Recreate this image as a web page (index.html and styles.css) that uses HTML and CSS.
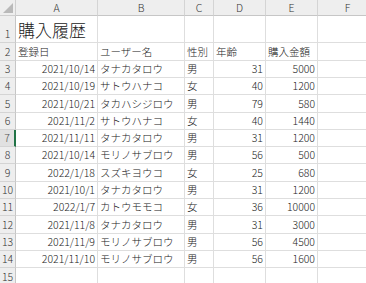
FILE: index.html
```html
<!DOCTYPE html>
<html lang="ja">
<head>
<meta charset="utf-8">
<title>購入履歴</title>
<link rel="stylesheet" href="styles.css">
</head>
<body>
<div class="sheet">
  <div class="corner"><span class="tri"></span></div>
  <div class="ch">A</div><div class="ch">B</div><div class="ch">C</div><div class="ch">D</div><div class="ch">E</div><div class="ch">F</div>

  <div class="rh">1</div><div class="c title">購入履歴</div><div class="c"></div><div class="c"></div><div class="c"></div><div class="c"></div><div class="c"></div>

  <div class="rh">2</div><div class="c">登録日</div><div class="c">ユーザー名</div><div class="c">性別</div><div class="c">年齢</div><div class="c">購入金額</div><div class="c"></div>

  <div class="rh">3</div><div class="c r">2021/10/14</div><div class="c">タナカタロウ</div><div class="c">男</div><div class="c r">31</div><div class="c r">5000</div><div class="c"></div>
  <div class="rh">4</div><div class="c r">2021/10/19</div><div class="c">サトウハナコ</div><div class="c">女</div><div class="c r">40</div><div class="c r">1200</div><div class="c"></div>
  <div class="rh">5</div><div class="c r">2021/10/21</div><div class="c">タカハシジロウ</div><div class="c">男</div><div class="c r">79</div><div class="c r">580</div><div class="c"></div>
  <div class="rh">6</div><div class="c r">2021/11/2</div><div class="c">サトウハナコ</div><div class="c">女</div><div class="c r">40</div><div class="c r">1440</div><div class="c"></div>
  <div class="rh active">7</div><div class="c r">2021/11/11</div><div class="c">タナカタロウ</div><div class="c">男</div><div class="c r">31</div><div class="c r">1200</div><div class="c"></div>
  <div class="rh">8</div><div class="c r">2021/10/14</div><div class="c">モリノサブロウ</div><div class="c">男</div><div class="c r">56</div><div class="c r">500</div><div class="c"></div>
  <div class="rh">9</div><div class="c r">2022/1/18</div><div class="c">スズキヨウコ</div><div class="c">女</div><div class="c r">25</div><div class="c r">680</div><div class="c"></div>
  <div class="rh">10</div><div class="c r">2021/10/1</div><div class="c">タナカタロウ</div><div class="c">男</div><div class="c r">31</div><div class="c r">1200</div><div class="c"></div>
  <div class="rh">11</div><div class="c r">2022/1/7</div><div class="c">カトウモモコ</div><div class="c">女</div><div class="c r">36</div><div class="c r">10000</div><div class="c"></div>
  <div class="rh">12</div><div class="c r">2021/11/8</div><div class="c">タナカタロウ</div><div class="c">男</div><div class="c r">31</div><div class="c r">3000</div><div class="c"></div>
  <div class="rh">13</div><div class="c r">2021/11/9</div><div class="c">モリノサブロウ</div><div class="c">男</div><div class="c r">56</div><div class="c r">4500</div><div class="c"></div>
  <div class="rh">14</div><div class="c r">2021/11/10</div><div class="c">モリノサブロウ</div><div class="c">男</div><div class="c r">56</div><div class="c r">1600</div><div class="c"></div>
  <div class="rh">15</div><div class="c"></div><div class="c"></div><div class="c"></div><div class="c"></div><div class="c"></div><div class="c"></div>
</div>
</body>
</html>
```
FILE: styles.css
```css
html, body {
  margin: 0;
  padding: 0;
  background: #ffffff;
  overflow: hidden;
}
body {
  width: 366px;
  height: 283px;
  font-family: "Noto Sans CJK JP", "Noto Sans", sans-serif;
  font-size: 10.5px;
  font-weight: 300;
  color: #222222;
}
.sheet {
  display: grid;
  grid-template-columns: 16px 82px 87px 29px 52px 52px 60px;
  grid-template-rows: 16px 27.4px repeat(14, 17.3px);
}
.sheet > div {
  box-sizing: border-box;
  overflow: hidden;
  white-space: nowrap;
}
.corner {
  background: #eeeeee;
  border-right: 1px solid #cfcfcf;
  border-bottom: 1px solid #cfcfcf;
  position: relative;
}
.tri {
  position: absolute;
  right: 2px;
  bottom: 2px;
  width: 0;
  height: 0;
  border-left: 10px solid transparent;
  border-bottom: 10px solid #b9b9b9;
}
.ch {
  background: #eeeeee;
  border-right: 1px solid #d4d4d4;
  border-bottom: 1px solid #c6c6c6;
  display: flex;
  align-items: center;
  justify-content: center;
  color: #333333;
  font-size: 10.5px;
  line-height: 14px;
}
.rh {
  background: #eeeeee;
  border-right: 1px solid #c6c6c6;
  border-bottom: 1px solid #d4d4d4;
  display: flex;
  align-items: flex-end;
  justify-content: center;
  padding-bottom: 1px;
  color: #333333;
  line-height: 15px;
}
.rh.active {
  background: #e1e1e1;
  border-right: 2px solid #217346;
  color: #555555;
}
.c {
  border-right: 1px solid #dedede;
  border-bottom: 1px solid #dedede;
  display: flex;
  align-items: flex-end;
  padding: 0 2px 1px 2px;
  line-height: 15px;
}
.c.r {
  justify-content: flex-end;
}
.title {
  font-size: 17px;
  line-height: 22px;
  overflow: visible !important;
}
```
